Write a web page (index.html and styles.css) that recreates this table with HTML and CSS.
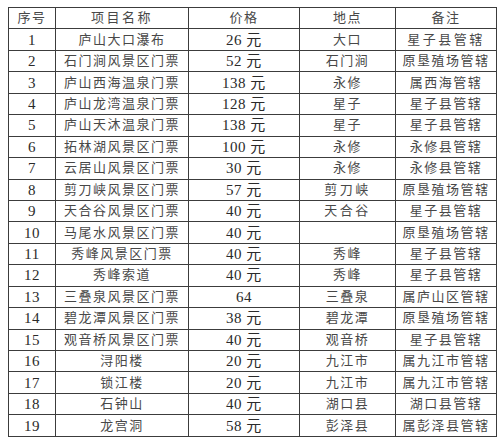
FILE: index.html
```html
<!DOCTYPE html>
<html lang="zh-CN">
<head>
<meta charset="utf-8">
<title>景区门票价格</title>
<link rel="stylesheet" href="styles.css">
</head>
<body>
<table class="price-table">
  <colgroup>
    <col class="c-no"><col class="c-name"><col class="c-price"><col class="c-place"><col class="c-note">
  </colgroup>
  <thead>
    <tr><th>序号</th><th class="wide">项目名称</th><th>价格</th><th>地点</th><th>备注</th></tr>
  </thead>
  <tbody>
    <tr><td class="num">1</td><td>庐山大口瀑布</td><td class="num">26 元</td><td>大口</td><td class="wide">星子县管辖</td></tr>
    <tr><td class="num">2</td><td>石门涧风景区门票</td><td class="num">52 元</td><td>石门涧</td><td>原垦殖场管辖</td></tr>
    <tr><td class="num">3</td><td>庐山西海温泉门票</td><td class="num">138 元</td><td>永修</td><td>属西海管辖</td></tr>
    <tr><td class="num">4</td><td>庐山龙湾温泉门票</td><td class="num">128 元</td><td>星子</td><td>星子县管辖</td></tr>
    <tr><td class="num">5</td><td>庐山天沐温泉门票</td><td class="num">138 元</td><td>星子</td><td>星子县管辖</td></tr>
    <tr><td class="num">6</td><td>拓林湖风景区门票</td><td class="num">100 元</td><td>永修</td><td>永修县管辖</td></tr>
    <tr><td class="num">7</td><td>云居山风景区门票</td><td class="num">30 元</td><td>永修</td><td>永修县管辖</td></tr>
    <tr><td class="num">8</td><td>剪刀峡风景区门票</td><td class="num">57 元</td><td class="wide">剪刀峡</td><td>原垦殖场管辖</td></tr>
    <tr><td class="num">9</td><td>天合谷风景区门票</td><td class="num">40 元</td><td class="wide">天合谷</td><td>星子县管辖</td></tr>
    <tr><td class="num">10</td><td>马尾水风景区门票</td><td class="num">40 元</td><td></td><td>原垦殖场管辖</td></tr>
    <tr><td class="num">11</td><td>秀峰风景区门票</td><td class="num">40 元</td><td>秀峰</td><td>星子县管辖</td></tr>
    <tr><td class="num">12</td><td>秀峰索道</td><td class="num">40 元</td><td>秀峰</td><td>星子县管辖</td></tr>
    <tr><td class="num">13</td><td>三叠泉风景区门票</td><td class="num">64</td><td>三叠泉</td><td>属庐山区管辖</td></tr>
    <tr><td class="num">14</td><td>碧龙潭风景区门票</td><td class="num">38 元</td><td>碧龙潭</td><td>原垦殖场管辖</td></tr>
    <tr><td class="num">15</td><td>观音桥风景区门票</td><td class="num">40 元</td><td>观音桥</td><td>星子县管辖</td></tr>
    <tr><td class="num">16</td><td>浔阳楼</td><td class="num">20 元</td><td>九江市</td><td>属九江市管辖</td></tr>
    <tr><td class="num">17</td><td>锁江楼</td><td class="num">20 元</td><td>九江市</td><td>属九江市管辖</td></tr>
    <tr><td class="num">18</td><td>石钟山</td><td class="num">40 元</td><td>湖口县</td><td>湖口县管辖</td></tr>
    <tr><td class="num">19</td><td>龙宫洞</td><td class="num">58 元</td><td>彭泽县</td><td>属彭泽县管辖</td></tr>
  </tbody>
</table>
</body>
</html>
```
FILE: styles.css
```css
html, body {
  margin: 0;
  padding: 0;
  background: #ffffff;
}

body {
  padding: 7px 0 0 8px;
}

.price-table {
  border-collapse: collapse;
  table-layout: fixed;
  width: 488px;
  font-family: "Liberation Serif", "Noto Sans CJK SC", serif;
  font-size: 13px;
  color: #484848;
}

.c-no { width: 47px; }
.c-name { width: 133px; }
.c-price { width: 111px; }
.c-place { width: 96px; }
.c-note { width: 101px; }

.price-table th,
.price-table td {
  border: 1px solid #3c3c3c;
  height: 20.45px;
  padding: 0;
  text-align: center;
  vertical-align: middle;
  font-weight: normal;
  letter-spacing: 1.5px;
  line-height: 16px;
  white-space: nowrap;
  overflow: hidden;
}

.price-table .num {
  font-size: 15px;
  letter-spacing: 0.5px;
  color: #2a2a2a;
}

.price-table .wide {
  letter-spacing: 2.5px;
}
```
